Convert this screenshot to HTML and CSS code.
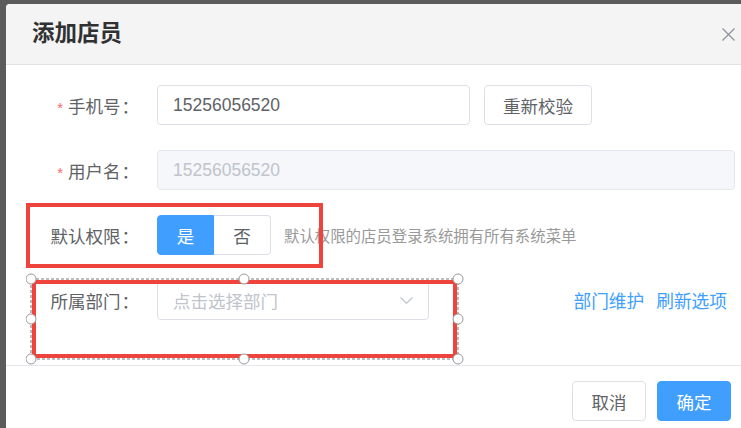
FILE: index.html
```
<!DOCTYPE html>
<html lang="zh-CN">
<head>
<meta charset="utf-8">
<title>添加店员</title>
<link rel="stylesheet" href="styles.css">
</head>
<body>
<div class="dialog">
  <div class="dlg-header">
    <span class="dlg-title">添加店员</span>
    <span class="dlg-close">
      <svg width="13" height="13" viewBox="0 0 13 13"><path d="M0.5 0.5 L12.5 12.5 M12.5 0.5 L0.5 12.5" stroke="#909399" stroke-width="1.3" fill="none"/></svg>
    </span>
  </div>
  <div class="dlg-body">
    <div class="form">
      <div class="item">
        <label class="label"><span class="req">*</span>手机号<span class="colon">：</span></label>
        <div class="content">
          <div class="input phone">15256056520</div>
          <button class="btn">重新校验</button>
        </div>
      </div>
      <div class="item">
        <label class="label"><span class="req">*</span>用户名<span class="colon">：</span></label>
        <div class="content">
          <div class="input disabled">15256056520</div>
        </div>
      </div>
      <div class="item">
        <label class="label">默认权限<span class="colon">：</span></label>
        <div class="content">
          <div class="seg">
            <span class="seg-btn active">是</span>
            <span class="seg-btn">否</span>
          </div>
          <span class="hint">默认权限的店员登录系统拥有所有系统菜单</span>
        </div>
      </div>
      <div class="item">
        <label class="label">所属部门<span class="colon">：</span></label>
        <div class="content">
          <div class="input select">
            <span class="placeholder">点击选择部门</span>
            <svg class="chev" width="13" height="7" viewBox="0 0 13 7"><path d="M0.5 0.5 L6.5 6.3 L12.5 0.5" stroke="#c0c4cc" stroke-width="1.2" fill="none"/></svg>
          </div>
          <div class="links">
            <a class="link">部门维护</a>
            <a class="link">刷新选项</a>
          </div>
        </div>
      </div>
    </div>
    <div class="mark mark-one"></div>
    <div class="mark mark-two"></div>
    <svg class="handles" width="440" height="96" viewBox="0 0 440 96">
      <rect x="5" y="6" width="427" height="80" fill="none" stroke="#a8a8a8" stroke-width="1.6" stroke-dasharray="3 2"/>
      <g fill="#fff" stroke="#9a9a9a" stroke-width="1">
        <circle cx="5" cy="6" r="5"/>
        <circle cx="218" cy="6" r="5"/>
        <circle cx="432" cy="6" r="5"/>
        <circle cx="5" cy="46" r="5"/>
        <circle cx="432" cy="46" r="5"/>
        <circle cx="5" cy="86" r="5"/>
        <circle cx="218" cy="86" r="5"/>
        <circle cx="432" cy="86" r="5"/>
      </g>
    </svg>
  </div>
  <div class="dlg-footer">
    <button class="btn fbtn">取消</button>
    <button class="btn fbtn primary">确定</button>
  </div>
</div>
</body>
</html>
```
FILE: styles.css
```
html, body {
  margin: 0;
  padding: 0;
  overflow: hidden;
  height: 100%;
}
body {
  background: #5b5b5b;
  font-family: "Liberation Sans", "Noto Sans CJK SC", sans-serif;
  color: #606266;
}
.dialog {
  margin: 4px 0 0 6px;
  width: 754px;
  height: 424px;
  background: #fff;
  border-top-left-radius: 4px;
  overflow: hidden;
}
.dlg-header {
  height: 60px;
  background: #f4f4f4;
  border-bottom: 1px solid #e2e2e2;
  display: flex;
  align-items: center;
  padding: 0 25px 0 26px;
}
.dlg-title {
  font-size: 22.5px;
  font-weight: bold;
  color: #303133;
  flex: 1;
  line-height: 1;
  margin-top: 1px;
}
.dlg-close {
  display: flex;
  width: 13px;
  height: 13px;
  margin-top: 1px;
}
.dlg-body {
  position: relative;
  padding: 20px 25px 20px 26px;
  border-bottom: 1px solid #e4e7ed;
}
.item {
  display: flex;
  align-items: center;
  height: 40px;
  margin-bottom: 25px;
}
.label {
  width: 125px;
  box-sizing: border-box;
  padding-right: 18px;
  text-align: right;
  font-size: 17.5px;
  color: #606266;
  flex: none;
}
.colon {
  font-family: "Noto Sans CJK TC", "Noto Sans CJK SC", sans-serif;
  margin-left: 1px;
}
.req {
  color: #f56c6c;
  font-size: 15px;
  margin-right: 5px;
}
.content {
  flex: 1;
  display: flex;
  align-items: center;
  height: 40px;
}
.input {
  box-sizing: border-box;
  height: 40px;
  border: 1px solid #dcdfe6;
  border-radius: 4px;
  padding: 0 15px;
  display: flex;
  align-items: center;
  font-size: 17.5px;
  color: #606266;
  background: #fff;
}
.phone {
  width: 313px;
}
.disabled {
  flex: 1;
  background: #f5f7fa;
  border-color: #e4e7ed;
  color: #c0c4cc;
}
.btn {
  box-sizing: border-box;
  height: 40px;
  border: 1px solid #dcdfe6;
  border-radius: 4px;
  background: #fff;
  color: #606266;
  font-family: inherit;
  font-size: 17.5px;
  padding: 0 18px;
  margin-left: 14px;
}
.seg {
  display: flex;
  height: 40px;
}
.seg-btn {
  box-sizing: border-box;
  width: 57px;
  height: 40px;
  display: flex;
  align-items: center;
  justify-content: center;
  font-size: 17.5px;
  color: #606266;
  border: 1px solid #dcdfe6;
  border-left: none;
  border-radius: 0 4px 4px 0;
}
.seg-btn.active {
  background: #409eff;
  border: 1px solid #409eff;
  color: #fff;
  border-radius: 4px 0 0 4px;
}
.hint {
  margin-left: 13px;
  font-size: 15.4px;
  color: #999;
}
.select {
  width: 272px;
  justify-content: space-between;
  padding-right: 15px;
}
.placeholder {
  color: #c0c4cc;
}
.chev {
  display: block;
}
.links {
  margin-left: auto;
  margin-right: 8px;
  display: flex;
  gap: 12px;
}
.link {
  color: #409eff;
  font-size: 17.7px;
}
.mark {
  position: absolute;
  box-sizing: border-box;
  border: 4px solid #ef443d;
}
.mark-one {
  left: 20px;
  top: 138px;
  width: 297px;
  height: 65px;
}
.mark-two {
  left: 26px;
  top: 215px;
  width: 425px;
  height: 78px;
}
.handles {
  position: absolute;
  left: 20px;
  top: 208px;
}
.dlg-footer {
  display: flex;
  justify-content: flex-end;
  padding: 15px 29px 0 0;
}
.fbtn {
  width: 74px;
  padding: 0;
  margin-left: 11px;
}
.primary {
  background: #409eff;
  border-color: #409eff;
  color: #fff;
}
```
